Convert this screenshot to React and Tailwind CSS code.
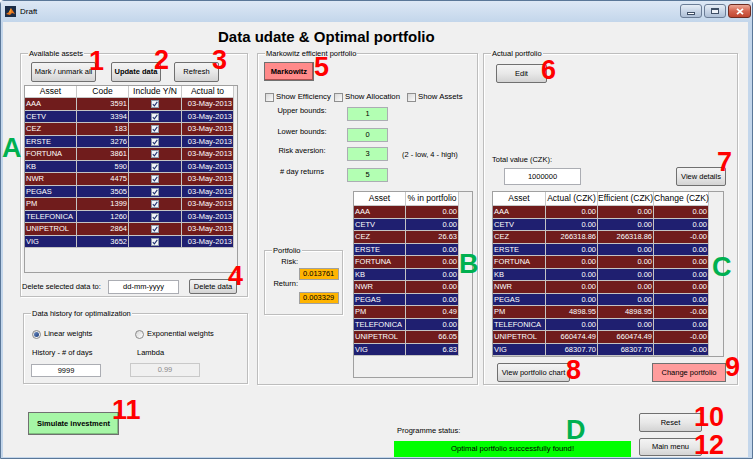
import React from "react";

const assets = ["AAA", "CETV", "CEZ", "ERSTE", "FORTUNA", "KB", "NWR", "PEGAS", "PM", "TELEFONICA", "UNIPETROL", "VIG"];
const codes = ["3591", "3394", "183", "3276", "3861", "590", "4475", "3505", "1399", "1260", "2864", "3652"];
const weights = ["0.00", "0.00", "26.63", "0.00", "0.00", "0.00", "0.00", "0.00", "0.49", "0.00", "66.05", "6.83"];
const actual = ["0.00", "0.00", "266318.86", "0.00", "0.00", "0.00", "0.00", "0.00", "4898.95", "0.00", "660474.49", "68307.70"];
const change = ["0.00", "0.00", "-0.00", "0.00", "0.00", "0.00", "0.00", "0.00", "-0.00", "0.00", "-0.00", "-0.00"];

const CHECK = "__check__";

const assetCols = [
  { label: "Asset", w: "w-[52px]", align: "text-left pl-[1px]" },
  { label: "Code", w: "w-[52px]", align: "text-right pr-[1px]" },
  { label: "Include Y/N", w: "w-[53px]", align: "text-center" },
  { label: "Actual to", w: "w-[52px]", align: "text-right pr-[1px]" },
];
const assetRows = assets.map((a, i) => [a, codes[i], CHECK, "03-May-2013"]);

const weightCols = [
  { label: "Asset", w: "w-[52px]", align: "text-left pl-[1px]" },
  { label: "% in portfolio", w: "w-[53px]", align: "text-right pr-[1px]" },
];
const weightRows = assets.map((a, i) => [a, weights[i]]);

const actualCols = [
  { label: "Asset", w: "w-[53px]", align: "text-left pl-[1px]" },
  { label: "Actual (CZK)", w: "w-[52px]", align: "text-right pr-[1px]" },
  { label: "Efficient (CZK)", w: "w-[56px]", align: "text-right pr-[1px]" },
  { label: "Change (CZK)", w: "w-[55px]", align: "text-right pr-[1px]" },
];
const actualRows = assets.map((a, i) => [a, actual[i], actual[i], change[i]]);

// red numbers and green letters painted over the screenshot
const notes = [
  { t: "1", c: "left-[89px] top-[51px] text-[#ff0000]" },
  { t: "2", c: "left-[154px] top-[50px] text-[#ff0000]" },
  { t: "3", c: "left-[212px] top-[50px] text-[#ff0000]" },
  { t: "4", c: "left-[228px] top-[266px] text-[#ff0000]" },
  { t: "5", c: "left-[314px] top-[57px] text-[#ff0000]" },
  { t: "6", c: "left-[541px] top-[60px] text-[#ff0000]" },
  { t: "7", c: "left-[717px] top-[152px] text-[#ff0000]" },
  { t: "8", c: "left-[566px] top-[360px] text-[#ff0000]" },
  { t: "9", c: "left-[725px] top-[357px] text-[#ff0000]" },
  { t: "10", c: "left-[694px] top-[407px] text-[#ff0000]" },
  { t: "11", c: "left-[112px] top-[400px] text-[#ff0000]" },
  { t: "12", c: "left-[694px] top-[435px] text-[#ff0000]" },
  { t: "A", c: "left-[2px] top-[138px] text-[#00b050]" },
  { t: "B", c: "left-[459px] top-[254px] text-[#00b050]" },
  { t: "C", c: "left-[712px] top-[257px] text-[#00b050]" },
  { t: "D", c: "left-[566px] top-[420px] text-[#00b050]" },
];

function Btn({ className = "", children }) {
  return (
    <button className={`flex shrink-0 items-center justify-center rounded-[2px] border border-[#707070] bg-linear-to-b from-[#f4f4f4] via-[#e8e8e8] to-[#d3d3d3] text-[7.5px] leading-none text-black ${className}`}>
      {children}
    </button>
  );
}

function Panel({ title, className = "", children }) {
  return (
    <div className={`relative shrink-0 border border-[#bdbdbd] shadow-[inset_1px_1px_0_#ffffff,1px_1px_0_#ffffff] ${className}`}>
      <span className="absolute -top-[6px] left-[7px] bg-[#f0f0f0] px-[1px] text-[7.5px] leading-[11px] whitespace-nowrap">{title}</span>
      {children}
    </div>
  );
}

function CellCheck() {
  return (
    <span className="inline-flex h-[8px] w-[8px] items-center justify-center border border-[#8e9aa8] bg-[#f2f4f8] align-middle">
      <svg width="6" height="6" viewBox="0 0 6 6">
        <path d="M0.8 3.1 L2.4 4.8 L5.3 0.9" fill="none" stroke="#1f3170" strokeWidth="1.1" />
      </svg>
    </span>
  );
}

function Grid({ className, headClass, cols, rows }) {
  return (
    <div className={`shrink-0 overflow-hidden border border-[#a0a0a0] bg-[#f0f0f0] ${className}`}>
      <div className={`flex ${headClass}`}>
        {cols.map((c) => (
          <div key={c.label} className={`${c.w} shrink-0 whitespace-nowrap border-r border-b border-[#c8c8c8] bg-white text-center text-[8.5px]`}>
            {c.label}
          </div>
        ))}
      </div>
      {rows.map((r, i) => (
        <div key={i} className="flex h-[12.5px]">
          {cols.map((c, j) => (
            <div
              key={j}
              className={`${c.w} ${c.align} ${i % 2 ? "bg-[#1f1f70]" : "bg-[#701c1c]"} shrink-0 overflow-hidden whitespace-nowrap border-r border-b border-[#c4c4c4] text-[7.5px] leading-[11.5px] text-white`}
            >
              {r[j] === CHECK ? <CellCheck /> : r[j]}
            </div>
          ))}
        </div>
      ))}
    </div>
  );
}

function Box({ className = "", children }) {
  return (
    <div className={`flex shrink-0 items-center justify-center border border-[#abadb3] text-[7.5px] leading-none ${className}`}>
      {children}
    </div>
  );
}

function Check({ className = "" }) {
  return <span className={`block h-[9px] w-[9px] shrink-0 border border-[#8f8f8f] bg-linear-to-br from-[#d8d8d8] to-[#fbfbfb] ${className}`} />;
}

function Radio({ on, className = "" }) {
  return (
    <span className={`flex h-[9px] w-[9px] shrink-0 items-center justify-center rounded-full border border-[#8a8a8a] bg-linear-to-br from-[#d6d6d6] to-[#ffffff] ${className}`}>
      {on && <span className="h-[5px] w-[5px] rounded-full bg-linear-to-br from-[#6f8fc4] to-[#1c3c7a]" />}
    </span>
  );
}

function ParamRow({ label, value, className = "", extra }) {
  return (
    <div className={`flex items-start ${className}`}>
      <span className="ml-[14px] mt-[1px] w-[60px] text-center leading-[11px]">{label}</span>
      <Box className="ml-[15px] mt-[3px] h-[14px] w-[41px] bg-[#b3ffb3] border-[#a6a6a6]">{value}</Box>
      {extra}
    </div>
  );
}

function Logo() {
  return (
    <svg width="11" height="11" viewBox="0 0 11 11">
      <rect width="11" height="11" fill="#1b2d48" />
      <path d="M1 8 L4 6 L6 2 L8 5 L10 8 L7 7 L5 9 Z" fill="#e8771f" />
      <path d="M4 6 L6 2 L5.5 7 Z" fill="#f6b13a" />
    </svg>
  );
}

export default function App() {
  return (
    <div className="relative h-[464px] w-[756px] overflow-hidden bg-white font-['Liberation_Sans',Arial,sans-serif] text-[7.5px] text-black">
      <div className="flex h-[459px] w-[753px] flex-col rounded-t-[4px] border border-[#5a7798] bg-[#c3d6eb]">
        {/* title bar */}
        <div className="flex h-[21px] shrink-0 items-center bg-linear-to-b from-[#dde8f5] to-[#c3d6eb] pl-[4px]">
          <Logo />
          <span className="ml-[4px] text-[8px]">Draft</span>
          <div className="ml-auto mr-[1px] flex gap-[2px] self-start pt-[3px]">
            <div className="flex h-[14px] w-[22px] items-center justify-center rounded-[3px] border border-[#6b7d96] bg-linear-to-b from-[#e6edf6] via-[#c8d5e6] to-[#aebfd6]">
              <div className="mt-[4px] h-[3px] w-[8px] border border-[#3f4f66] bg-white" />
            </div>
            <div className="flex h-[14px] w-[22px] items-center justify-center rounded-[3px] border border-[#6b7d96] bg-linear-to-b from-[#e6edf6] via-[#c8d5e6] to-[#aebfd6]">
              <div className="h-[6px] w-[8px] border border-[#3f4f66] bg-[#eef2f8] shadow-[inset_0_1px_0_#3f4f66]" />
            </div>
            <div className="flex h-[14px] w-[23px] items-center justify-center rounded-[3px] border border-[#6d2b21] bg-linear-to-b from-[#eba898] via-[#d4634f] to-[#c04630]">
              <svg width="8" height="7" viewBox="0 0 8 7">
                <path d="M1 0.8 L7 6.2 M7 0.8 L1 6.2" stroke="#ffffff" strokeWidth="1.8" />
              </svg>
            </div>
          </div>
        </div>

        {/* client area */}
        <div className="mb-[1px] ml-[2px] mr-[4px] flex flex-1 flex-col bg-[#f0f0f0]">
          <div className="h-[31px] shrink-0 pl-[215px] pt-[7px]">
            <h1 className="text-[15px] font-bold leading-none">Data udate &amp; Optimal portfolio</h1>
          </div>

          <div className="flex h-[332px] shrink-0 pl-[17px]">
            {/* left column */}
            <div className="flex w-[228px] shrink-0 flex-col">
              <Panel title="Available assets" className="h-[244px] w-[228px] pl-[3px] pt-[8px]">
                <div className="ml-[7px] flex h-[20px]">
                  <Btn className="h-[20px] w-[65px]">Mark / unmark all</Btn>
                  <Btn className="ml-[15px] h-[20px] w-[50px] font-bold">Update data</Btn>
                  <Btn className="ml-[13px] h-[20px] w-[45px]">Refresh</Btn>
                </div>
                <Grid className="mt-[3px] h-[188px] w-[214px]" headClass="h-[12px] leading-[11px]" cols={assetCols} rows={assetRows} />
                <div className="-ml-[2px] mt-[6px] flex items-center">
                  <span className="w-[86px] whitespace-nowrap">Delete selected data to:</span>
                  <Box className="h-[14px] w-[71px] bg-white">dd-mm-yyyy</Box>
                  <Btn className="ml-[10px] h-[15px] w-[48px]">Delete data</Btn>
                </div>
              </Panel>

              <Panel title="Data history for optimalization" className="ml-[3px] mt-[16px] h-[71px] w-[225px]">
                <div className="mt-[15px] flex h-[10px] items-center">
                  <Radio on className="ml-[8px]" />
                  <span className="ml-[3px] w-[91px]">Linear weights</span>
                  <Radio />
                  <span className="ml-[3px]">Exponential weights</span>
                </div>
                <div className="mt-[8px] flex leading-[11px]">
                  <span className="ml-[8px] w-[105px]">History - # of days</span>
                  <span>Lambda</span>
                </div>
                <div className="mt-[5px] flex items-start">
                  <Box className="ml-[7px] mt-[1px] h-[13px] w-[70px] bg-white">9999</Box>
                  <Box className="ml-[29px] h-[14px] w-[70px] border-[#c9c9c9] bg-[#f0f0f0] text-[#8a8a8a]">0.99</Box>
                </div>
              </Panel>
            </div>

            {/* middle column */}
            <Panel title="Markowitz efficient portfolio" className="ml-[9px] h-[332px] w-[221px]">
              <Btn className="ml-[6px] mt-[8px] h-[19px] w-[50px] rounded-none border-[#6a6a6a] bg-none bg-[#ff8a8a] font-bold shadow-[inset_-1px_-1px_0_#b05050]">Markowitz</Btn>
              <div className="ml-[7px] mt-[11px] flex h-[10px] items-center">
                <div className="flex w-[69px] items-center">
                  <Check />
                  <span className="ml-[2px] whitespace-nowrap text-[7.8px]">Show Efficiency</span>
                </div>
                <div className="flex w-[73px] items-center">
                  <Check />
                  <span className="ml-[2px] whitespace-nowrap text-[7.8px]">Show Allocation</span>
                </div>
                <div className="flex items-center">
                  <Check />
                  <span className="ml-[2px] whitespace-nowrap text-[7.8px]">Show Assets</span>
                </div>
              </div>
              <ParamRow className="mt-[2px]" label="Upper bounds:" value="1" />
              <ParamRow className="mt-[4px]" label="Lower bounds:" value="0" />
              <ParamRow
                className="mt-[2px]"
                label="Risk aversion:"
                value="3"
                extra={<span className="ml-[14px] mt-[5px] whitespace-nowrap leading-[11px]">(2 - low, 4 - high)</span>}
              />
              <ParamRow className="mt-[4px]" label="# day returns" value="5" />

              <div className="mt-[9px] flex items-start">
                <Panel title="Portfolio" className="ml-[6px] mt-[59px] h-[65px] w-[79px]">
                  <div className="mt-[5px] w-[33px] text-right leading-[11px]">Risk:</div>
                  <div className="ml-[34px] mt-[1px] h-[12px] w-[40px] border border-[#a0a0a0] bg-[#ffb400] pl-[3px] leading-[10px]">0.013761</div>
                  <div className="-mt-[2px] w-[33px] text-right leading-[11px]">Return:</div>
                  <div className="ml-[34px] mt-[3px] h-[12px] w-[40px] border border-[#a0a0a0] bg-[#ffb400] pl-[3px] leading-[10px]">0.003329</div>
                </Panel>
                <Grid className="ml-[10px] h-[187px] w-[120px]" headClass="h-[14px] leading-[13px]" cols={weightCols} rows={weightRows} />
              </div>
            </Panel>

            {/* right column */}
            <Panel title="Actual portfolio" className="ml-[5px] h-[332px] w-[255px]">
              <Btn className="ml-[12px] mt-[10px] h-[19px] w-[51px]">Edit</Btn>
              <div className="ml-[8px] mt-[71px] leading-[11px]">Total value (CZK):</div>
              <div className="mt-[2px] flex items-start">
                <Box className="ml-[20px] mt-[1px] h-[17px] w-[77px] bg-white">1000000</Box>
                <Btn className="ml-[95px] h-[19px] w-[50px]">View details</Btn>
              </div>
              <Grid className="ml-[8px] mt-[5px] h-[166px] w-[232px]" headClass="h-[14px] leading-[13px]" cols={actualCols} rows={actualRows} />
              <div className="mt-[6px] flex">
                <Btn className="ml-[13px] h-[19px] w-[73px] whitespace-nowrap">View portfolio chart</Btn>
                <Btn className="ml-[82px] h-[19px] w-[74px] rounded-none border-[#9a9a9a] bg-none bg-[#ff9c9c]">Change portfolio</Btn>
              </div>
            </Panel>
          </div>

          {/* bottom row */}
          <div className="flex h-[72px] shrink-0 items-start">
            <Btn className="ml-[25px] mt-[27px] h-[23px] w-[91px] rounded-none border-[#8c8c8c] bg-none bg-[#a6f6a6] font-bold shadow-[inset_-1px_-1px_0_#7fbf7f]">Simulate investment</Btn>
            <div className="ml-[275px] mt-[40px] flex w-[237px] flex-col">
              <span className="pl-[3px] leading-[11px]">Programme status:</span>
              <div className="mt-[5px] h-[16px] bg-[#00ff00] text-center text-[7.7px] leading-[16px]">Optimal portfolio successfully found!</div>
            </div>
            <div className="ml-[8px] mt-[28px] flex w-[63px] flex-col">
              <Btn className="h-[19px] w-[63px]">Reset</Btn>
              <Btn className="mt-[6px] h-[18px] w-[63px]">Main menu</Btn>
            </div>
          </div>
        </div>
      </div>

      {notes.map((n) => (
        <span key={n.t} className={`absolute text-[27px] font-bold leading-[20px] ${n.c}`}>{n.t}</span>
      ))}
    </div>
  );
}
